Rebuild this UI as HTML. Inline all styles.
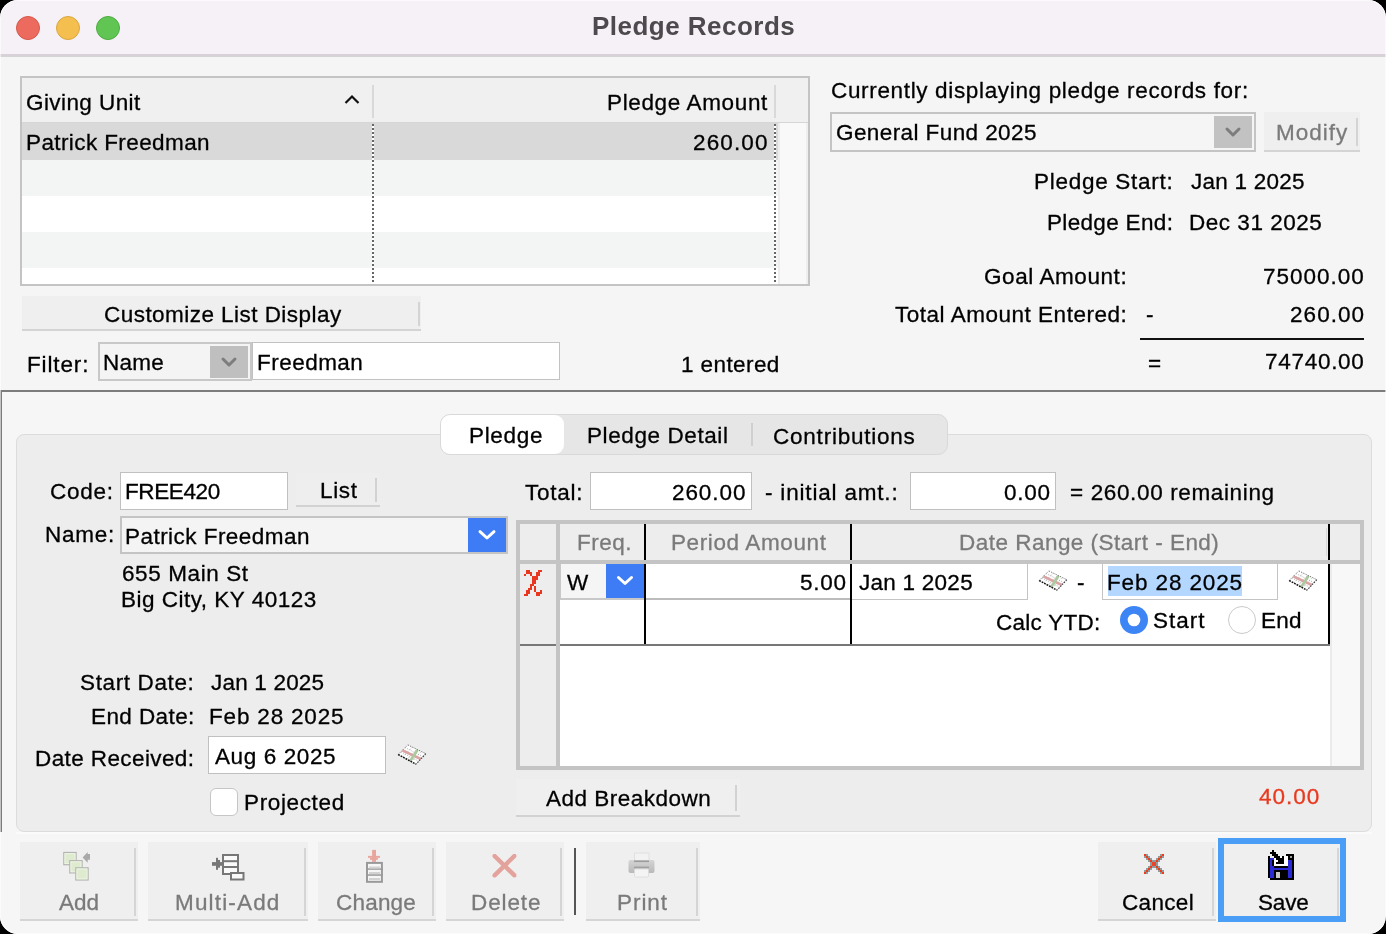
<!DOCTYPE html>
<html><head><meta charset="utf-8"><title>Pledge Records</title>
<style>
html,body{margin:0;padding:0;background:#000;width:1386px;height:934px;overflow:hidden;}
#win{position:absolute;left:0;top:0;width:1386px;height:934px;border-radius:18px;overflow:hidden;background:#f5f5f5;}
.t{position:absolute;white-space:nowrap;font-family:"Liberation Sans",sans-serif;will-change:transform;-webkit-text-stroke:0.3px currentColor;}
</style></head><body><div id="win">
<div style="position:absolute;left:0px;top:0px;width:1386px;height:54px;background:#f6f1f6;"></div>
<div style="position:absolute;left:0px;top:54px;width:1386px;height:1.5px;background:#d8d2d8;"></div>
<div style="position:absolute;left:0px;top:55.5px;width:1386px;height:1.5px;background:#d4d4d4;"></div>
<div style="position:absolute;left:0px;top:57px;width:1386px;height:334px;background:#f5f5f5;"></div>
<div class="t" style="left:591.60px;top:13.49px;font-size:26px;line-height:26px;color:#4c4a4c;font-weight:700;letter-spacing:0.477px;-webkit-text-stroke:0;">Pledge Records</div>
<svg style="position:absolute;left:15px;top:15px;" width="26" height="26" viewBox="0 0 26 26"><circle cx="13" cy="13" r="11.5" fill="#ed6a5e" stroke="#d5574b" stroke-width="1"/></svg>
<svg style="position:absolute;left:55px;top:15px;" width="26" height="26" viewBox="0 0 26 26"><circle cx="13" cy="13" r="11.5" fill="#f5bf4f" stroke="#d9a63e" stroke-width="1"/></svg>
<svg style="position:absolute;left:95px;top:15px;" width="26" height="26" viewBox="0 0 26 26"><circle cx="13" cy="13" r="11.5" fill="#61c554" stroke="#4eab42" stroke-width="1"/></svg>
<div style="position:absolute;left:20px;top:76px;width:790px;height:210px;background:#c4c4c4;"></div>
<div style="position:absolute;left:22px;top:78px;width:786px;height:206px;background:#ffffff;"></div>
<div style="position:absolute;left:22px;top:78px;width:786px;height:44px;background:#f0f0f0;"></div>
<div style="position:absolute;left:22px;top:122px;width:786px;height:1px;background:#d6d6d6;"></div>
<div style="position:absolute;left:22px;top:123px;width:756px;height:37px;background:#d9d9d9;"></div>
<div style="position:absolute;left:22px;top:160px;width:756px;height:36px;background:#f3f4f4;"></div>
<div style="position:absolute;left:22px;top:232px;width:756px;height:36px;background:#f3f4f4;"></div>
<div style="position:absolute;left:778px;top:123px;width:30px;height:161px;background:#f9f9f9;border-left:2px solid #ececec;border-right:2px solid #efefef;box-sizing:border-box;"></div>
<div style="position:absolute;left:372px;top:85px;width:2px;height:33px;background:#d9d9d9;"></div>
<div style="position:absolute;left:774px;top:85px;width:2px;height:33px;background:#d9d9d9;"></div>
<div style="position:absolute;left:372px;top:124px;width:2px;height:160px;background:repeating-linear-gradient(180deg,#666 0 2px,#ffffff 2px 4px);"></div>
<div style="position:absolute;left:774px;top:124px;width:2px;height:160px;background:repeating-linear-gradient(180deg,#666 0 2px,#ffffff 2px 4px);"></div>
<div class="t" style="left:25.80px;top:91.85px;font-size:22.5px;line-height:22.5px;color:#000;font-weight:400;letter-spacing:0.420px;">Giving Unit</div>
<svg style="position:absolute;left:343px;top:93px;" width="18" height="12" viewBox="0 0 18 12"><polyline points="2.5,10 9,3.5 15.5,10" fill="none" stroke="#111" stroke-width="2.2"/></svg>
<div class="t" style="left:607.00px;top:91.85px;font-size:22.5px;line-height:22.5px;color:#000;font-weight:400;letter-spacing:0.642px;">Pledge Amount</div>
<div class="t" style="left:25.80px;top:131.85px;font-size:22.5px;line-height:22.5px;color:#000;font-weight:400;letter-spacing:0.400px;">Patrick Freedman</div>
<div class="t" style="left:693.30px;top:131.85px;font-size:22.5px;line-height:22.5px;color:#000;font-weight:400;letter-spacing:1.140px;">260.00</div>
<div style="position:absolute;left:22px;top:296px;width:399px;height:35px;background:#efefef;"></div>
<div style="position:absolute;left:22px;top:329px;width:399px;height:2px;background:#d4d4d4;"></div>
<div style="position:absolute;left:418px;top:302px;width:2px;height:24px;background:#d4d4d4;"></div>
<div class="t" style="left:104.00px;top:303.85px;font-size:22.5px;line-height:22.5px;color:#000;font-weight:400;letter-spacing:0.457px;">Customize List Display</div>
<div class="t" style="left:27.20px;top:353.60px;font-size:22.5px;line-height:22.5px;color:#000;font-weight:400;letter-spacing:0.867px;">Filter:</div>
<div style="position:absolute;left:98px;top:342px;width:154px;height:39px;background:#f4f4f4;border:2px solid #c8c8c8;box-sizing:border-box;"></div>
<div style="position:absolute;left:210px;top:346px;width:38px;height:32px;background:#bfbfbf;"></div>
<svg style="position:absolute;left:210px;top:346px;" width="38" height="32" viewBox="0 0 38 32"><polyline points="13,13 19,19 25,13" fill="none" stroke="#7d7d7d" stroke-width="3" stroke-linecap="round" stroke-linejoin="round"/></svg>
<div class="t" style="left:103.40px;top:351.65px;font-size:22.5px;line-height:22.5px;color:#000;font-weight:400;letter-spacing:0.267px;">Name</div>
<div style="position:absolute;left:252px;top:342px;width:308px;height:38px;background:#ffffff;border:1.5px solid #c2c2c2;box-sizing:border-box;"></div>
<div class="t" style="left:256.70px;top:351.65px;font-size:22.5px;line-height:22.5px;color:#000;font-weight:400;letter-spacing:0.471px;">Freedman</div>
<div class="t" style="left:680.60px;top:353.85px;font-size:22.5px;line-height:22.5px;color:#000;font-weight:400;letter-spacing:0.412px;">1 entered</div>
<div class="t" style="left:831.30px;top:79.65px;font-size:22.5px;line-height:22.5px;color:#000;font-weight:400;letter-spacing:0.659px;">Currently displaying pledge records for:</div>
<div style="position:absolute;left:830px;top:112px;width:426px;height:40px;background:#f5f5f5;border:2px solid #c4c4c4;box-sizing:border-box;"></div>
<div style="position:absolute;left:1214px;top:116px;width:38px;height:32px;background:#c2c2c2;"></div>
<svg style="position:absolute;left:1214px;top:116px;" width="38" height="32" viewBox="0 0 38 32"><polyline points="13,13 19,19 25,13" fill="none" stroke="#7d7d7d" stroke-width="3" stroke-linecap="round" stroke-linejoin="round"/></svg>
<div class="t" style="left:836.00px;top:121.85px;font-size:22.5px;line-height:22.5px;color:#000;font-weight:400;letter-spacing:0.412px;">General Fund 2025</div>
<div style="position:absolute;left:1264px;top:112px;width:96px;height:40px;background:#efefef;"></div>
<div style="position:absolute;left:1264px;top:150px;width:96px;height:2px;background:#d4d4d4;"></div>
<div style="position:absolute;left:1356px;top:118px;width:2px;height:28px;background:#d4d4d4;"></div>
<div class="t" style="left:1275.70px;top:121.85px;font-size:22.5px;line-height:22.5px;color:#7a7a7a;font-weight:400;letter-spacing:0.980px;">Modify</div>
<div class="t" style="left:1034.40px;top:171.45px;font-size:22.5px;line-height:22.5px;color:#000;font-weight:400;letter-spacing:0.717px;">Pledge Start:</div>
<div class="t" style="left:1190.80px;top:171.45px;font-size:22.5px;line-height:22.5px;color:#000;font-weight:400;letter-spacing:0.244px;">Jan 1 2025</div>
<div class="t" style="left:1046.70px;top:211.85px;font-size:22.5px;line-height:22.5px;color:#000;font-weight:400;letter-spacing:0.330px;">Pledge End:</div>
<div class="t" style="left:1188.80px;top:211.85px;font-size:22.5px;line-height:22.5px;color:#000;font-weight:400;letter-spacing:0.520px;">Dec 31 2025</div>
<div class="t" style="left:984.20px;top:266.05px;font-size:22.5px;line-height:22.5px;color:#000;font-weight:400;letter-spacing:0.573px;">Goal Amount:</div>
<div class="t" style="left:1263.20px;top:266.05px;font-size:22.5px;line-height:22.5px;color:#000;font-weight:400;letter-spacing:1.000px;">75000.00</div>
<div class="t" style="left:895.30px;top:303.95px;font-size:22.5px;line-height:22.5px;color:#000;font-weight:400;letter-spacing:0.520px;">Total Amount Entered:</div>
<div class="t" style="left:1146.00px;top:303.95px;font-size:22.5px;line-height:22.5px;color:#000;font-weight:400;letter-spacing:0.000px;">-</div>
<div class="t" style="left:1289.70px;top:303.95px;font-size:22.5px;line-height:22.5px;color:#000;font-weight:400;letter-spacing:1.060px;">260.00</div>
<div style="position:absolute;left:1140px;top:338px;width:224px;height:2px;background:#111;"></div>
<div class="t" style="left:1148.10px;top:353.15px;font-size:22.5px;line-height:22.5px;color:#000;font-weight:400;letter-spacing:0.000px;">=</div>
<div class="t" style="left:1265.00px;top:350.85px;font-size:22.5px;line-height:22.5px;color:#000;font-weight:400;letter-spacing:0.714px;">74740.00</div>
<div style="position:absolute;left:0px;top:390px;width:1386px;height:2px;background:#7c7c7c;"></div>
<div style="position:absolute;left:0px;top:392px;width:1384px;height:542px;background:#f6f6f6;"></div>
<div style="position:absolute;left:0px;top:392px;width:2px;height:440px;background:#7c7c7c;"></div>
<div style="position:absolute;left:16px;top:434px;width:1356px;height:398px;background:#ededed;border:1px solid #dcdcdc;border-radius:8px;box-sizing:border-box;"></div>
<div style="position:absolute;left:16px;top:832px;width:1356px;height:2px;background:#fbfbfb;"></div>
<div style="position:absolute;left:440px;top:414px;width:508px;height:41px;background:#e6e6e6;border:1px solid #d9d9d9;border-radius:10px;box-sizing:border-box;"></div>
<div style="position:absolute;left:441px;top:415px;width:123px;height:39px;background:#ffffff;border-radius:9px;"></div>
<div style="position:absolute;left:751px;top:423px;width:2px;height:23px;background:#d0d0d0;"></div>
<div class="t" style="left:468.80px;top:425.35px;font-size:22.5px;line-height:22.5px;color:#000;font-weight:400;letter-spacing:0.680px;">Pledge</div>
<div class="t" style="left:586.80px;top:425.35px;font-size:22.5px;line-height:22.5px;color:#000;font-weight:400;letter-spacing:0.592px;">Pledge Detail</div>
<div class="t" style="left:773.40px;top:425.85px;font-size:22.5px;line-height:22.5px;color:#000;font-weight:400;letter-spacing:0.775px;">Contributions</div>
<div class="t" style="left:49.70px;top:481.45px;font-size:22.5px;line-height:22.5px;color:#000;font-weight:400;letter-spacing:0.750px;">Code:</div>
<div style="position:absolute;left:120px;top:472px;width:168px;height:38px;background:#fff;border:1.5px solid #c0c0c0;box-sizing:border-box;"></div>
<div class="t" style="left:124.80px;top:481.45px;font-size:22.5px;line-height:22.5px;color:#000;font-weight:400;letter-spacing:-0.383px;">FREE420</div>
<div style="position:absolute;left:296px;top:473px;width:84px;height:34px;background:#eeeeee;"></div>
<div style="position:absolute;left:296px;top:505px;width:84px;height:2px;background:#d2d2d2;"></div>
<div style="position:absolute;left:375px;top:478px;width:2px;height:24px;background:#d2d2d2;"></div>
<div class="t" style="left:319.70px;top:479.75px;font-size:22.5px;line-height:22.5px;color:#000;font-weight:400;letter-spacing:0.667px;">List</div>
<div class="t" style="left:44.90px;top:523.85px;font-size:22.5px;line-height:22.5px;color:#000;font-weight:400;letter-spacing:0.725px;">Name:</div>
<div style="position:absolute;left:120px;top:516px;width:388px;height:38px;background:#f4f4f4;border:2px solid #c4c4c4;box-sizing:border-box;"></div>
<div style="position:absolute;left:468px;top:518px;width:38px;height:34px;background:#3d7cf4;"></div>
<svg style="position:absolute;left:468px;top:518px;" width="38" height="34" viewBox="0 0 38 34"><polyline points="12,13.7 19,20 26,13.7" fill="none" stroke="#fff" stroke-width="3" stroke-linecap="round" stroke-linejoin="round"/></svg>
<div class="t" style="left:124.80px;top:525.65px;font-size:22.5px;line-height:22.5px;color:#000;font-weight:400;letter-spacing:0.460px;">Patrick Freedman</div>
<div class="t" style="left:121.70px;top:563.25px;font-size:22.5px;line-height:22.5px;color:#000;font-weight:400;letter-spacing:0.600px;">655 Main St</div>
<div class="t" style="left:120.70px;top:589.45px;font-size:22.5px;line-height:22.5px;color:#000;font-weight:400;letter-spacing:0.500px;">Big City, KY 40123</div>
<div class="t" style="left:79.70px;top:672.15px;font-size:22.5px;line-height:22.5px;color:#000;font-weight:400;letter-spacing:0.630px;">Start Date:</div>
<div class="t" style="left:211.00px;top:671.95px;font-size:22.5px;line-height:22.5px;color:#000;font-weight:400;letter-spacing:0.189px;">Jan 1 2025</div>
<div class="t" style="left:90.70px;top:705.75px;font-size:22.5px;line-height:22.5px;color:#000;font-weight:400;letter-spacing:0.412px;">End Date:</div>
<div class="t" style="left:209.00px;top:705.75px;font-size:22.5px;line-height:22.5px;color:#000;font-weight:400;letter-spacing:0.820px;">Feb 28 2025</div>
<div class="t" style="left:34.80px;top:747.85px;font-size:22.5px;line-height:22.5px;color:#000;font-weight:400;letter-spacing:0.400px;">Date Received:</div>
<div style="position:absolute;left:208px;top:736px;width:178px;height:38px;background:#fff;border:1.5px solid #c0c0c0;box-sizing:border-box;"></div>
<div class="t" style="left:214.60px;top:745.85px;font-size:22.5px;line-height:22.5px;color:#000;font-weight:400;letter-spacing:0.600px;">Aug 6 2025</div>
<div style="position:absolute;left:210px;top:788px;width:28px;height:28px;background:#fff;border:1px solid #c6c6c6;border-radius:6px;box-sizing:border-box;"></div>
<div class="t" style="left:243.50px;top:791.65px;font-size:22.5px;line-height:22.5px;color:#000;font-weight:400;letter-spacing:0.638px;">Projected</div>
<div class="t" style="left:524.90px;top:481.65px;font-size:22.5px;line-height:22.5px;color:#000;font-weight:400;letter-spacing:0.740px;">Total:</div>
<div style="position:absolute;left:590px;top:472px;width:162px;height:38px;background:#fff;border:1.5px solid #c0c0c0;box-sizing:border-box;"></div>
<div class="t" style="left:672.00px;top:481.65px;font-size:22.5px;line-height:22.5px;color:#000;font-weight:400;letter-spacing:0.920px;">260.00</div>
<div class="t" style="left:764.60px;top:481.85px;font-size:22.5px;line-height:22.5px;color:#000;font-weight:400;letter-spacing:0.814px;">- initial amt.:</div>
<div style="position:absolute;left:910px;top:472px;width:146px;height:38px;background:#fff;border:1.5px solid #c0c0c0;box-sizing:border-box;"></div>
<div class="t" style="left:1003.70px;top:481.85px;font-size:22.5px;line-height:22.5px;color:#000;font-weight:400;letter-spacing:0.767px;">0.00</div>
<div class="t" style="left:1069.80px;top:482.05px;font-size:22.5px;line-height:22.5px;color:#000;font-weight:400;letter-spacing:0.635px;">= 260.00 remaining</div>
<div style="position:absolute;left:516px;top:520px;width:848px;height:250px;background:#c4c4c4;"></div>
<div style="position:absolute;left:520px;top:524px;width:840px;height:242px;background:#ffffff;"></div>
<div style="position:absolute;left:520px;top:524px;width:840px;height:36px;background:#ededed;"></div>
<div style="position:absolute;left:520px;top:564px;width:36px;height:202px;background:#ededed;"></div>
<div style="position:absolute;left:556px;top:524px;width:4px;height:242px;background:#c4c4c4;"></div>
<div style="position:absolute;left:1330px;top:564px;width:30px;height:202px;background:#f8f8f8;border-left:2px solid #ebebeb;box-sizing:border-box;"></div>
<div style="position:absolute;left:1326px;top:528px;width:1px;height:28px;background:#d8d8d8;"></div>
<div style="position:absolute;left:644px;top:524px;width:2px;height:122px;background:#000;"></div>
<div style="position:absolute;left:850px;top:524px;width:2px;height:122px;background:#000;"></div>
<div style="position:absolute;left:1328px;top:524px;width:2px;height:122px;background:#000;"></div>
<div style="position:absolute;left:520px;top:560px;width:840px;height:4px;background:#c4c4c4;"></div>
<div style="position:absolute;left:520px;top:644px;width:36px;height:2px;background:#777;"></div>
<div style="position:absolute;left:560px;top:644px;width:770px;height:2px;background:#777;"></div>
<div class="t" style="left:577.40px;top:532.05px;font-size:22.5px;line-height:22.5px;color:#7a7a7a;font-weight:400;letter-spacing:0.500px;">Freq.</div>
<div class="t" style="left:670.60px;top:532.05px;font-size:22.5px;line-height:22.5px;color:#7a7a7a;font-weight:400;letter-spacing:0.617px;">Period Amount</div>
<div class="t" style="left:959.00px;top:531.65px;font-size:22.5px;line-height:22.5px;color:#7a7a7a;font-weight:400;letter-spacing:0.478px;">Date Range (Start - End)</div>
<div style="position:absolute;left:560px;top:564px;width:84px;height:36px;background:#c8c8c8;"></div>
<div style="position:absolute;left:561px;top:564px;width:83px;height:34px;background:#f5f5f5;"></div>
<div style="position:absolute;left:606px;top:564px;width:38px;height:34px;background:#3d7cf4;"></div>
<svg style="position:absolute;left:606px;top:564px;" width="38" height="34" viewBox="0 0 38 34"><polyline points="12.5,13.5 19,19.5 25.5,13.5" fill="none" stroke="#fff" stroke-width="3" stroke-linecap="round" stroke-linejoin="round"/></svg>
<div class="t" style="left:566.90px;top:571.85px;font-size:22.5px;line-height:22.5px;color:#000;font-weight:400;letter-spacing:0.000px;">W</div>
<div style="position:absolute;left:646px;top:598px;width:204px;height:2px;background:#bcbcbc;"></div>
<div class="t" style="left:800.00px;top:571.85px;font-size:22.5px;line-height:22.5px;color:#000;font-weight:400;letter-spacing:0.733px;">5.00</div>
<div style="position:absolute;left:852px;top:564px;width:176px;height:36px;background:#fff;border-right:1.5px solid #c4c4c4;border-bottom:1.5px solid #c4c4c4;box-sizing:border-box;"></div>
<div class="t" style="left:858.90px;top:571.85px;font-size:22.5px;line-height:22.5px;color:#000;font-weight:400;letter-spacing:0.256px;">Jan 1 2025</div>
<div class="t" style="left:1076.60px;top:571.85px;font-size:22.5px;line-height:22.5px;color:#000;font-weight:400;letter-spacing:0.000px;">-</div>
<div style="position:absolute;left:1102px;top:564px;width:176px;height:36px;background:#fff;border:1.5px solid #c4c4c4;border-top:none;box-sizing:border-box;"></div>
<div style="position:absolute;left:1108px;top:566px;width:134px;height:30px;background:#b3d7ff;"></div>
<div class="t" style="left:1107.00px;top:571.85px;font-size:22.5px;line-height:22.5px;color:#000;font-weight:400;letter-spacing:0.870px;">Feb 28 2025</div>
<div class="t" style="left:995.80px;top:611.65px;font-size:22.5px;line-height:22.5px;color:#000;font-weight:400;letter-spacing:0.275px;">Calc YTD:</div>
<svg style="position:absolute;left:1119px;top:605px;" width="30" height="30" viewBox="0 0 30 30"><circle cx="15" cy="15" r="14" fill="#3d84f5"/><circle cx="15" cy="15" r="6.3" fill="#fff"/></svg>
<div class="t" style="left:1153.40px;top:610.05px;font-size:22.5px;line-height:22.5px;color:#000;font-weight:400;letter-spacing:1.025px;">Start</div>
<svg style="position:absolute;left:1227px;top:605px;" width="30" height="30" viewBox="0 0 30 30"><circle cx="15" cy="15" r="13.5" fill="#fff" stroke="#cacaca" stroke-width="1"/></svg>
<div class="t" style="left:1260.80px;top:610.05px;font-size:22.5px;line-height:22.5px;color:#000;font-weight:400;letter-spacing:0.200px;">End</div>
<div style="position:absolute;left:516px;top:779px;width:224px;height:38px;background:#efefef;"></div>
<div style="position:absolute;left:516px;top:815px;width:224px;height:2px;background:#d2d2d2;"></div>
<div style="position:absolute;left:735px;top:785px;width:2px;height:26px;background:#d2d2d2;"></div>
<div class="t" style="left:546.00px;top:787.85px;font-size:22.5px;line-height:22.5px;color:#000;font-weight:400;letter-spacing:0.500px;">Add Breakdown</div>
<div class="t" style="left:1258.90px;top:786.15px;font-size:22.5px;line-height:22.5px;color:#e8391f;font-weight:400;letter-spacing:1.000px;">40.00</div>
<div style="position:absolute;left:20px;top:842px;width:118px;height:79px;background:#efefef;"></div>
<div style="position:absolute;left:20px;top:919px;width:118px;height:2px;background:#d5d5d5;"></div>
<div style="position:absolute;left:134px;top:848px;width:2px;height:68px;background:#d5d5d5;"></div>
<div class="t" style="left:58.80px;top:891.85px;font-size:22.5px;line-height:22.5px;color:#7a7a7a;font-weight:400;letter-spacing:0.000px;">Add</div>
<div style="position:absolute;left:148px;top:842px;width:160px;height:79px;background:#efefef;"></div>
<div style="position:absolute;left:148px;top:919px;width:160px;height:2px;background:#d5d5d5;"></div>
<div style="position:absolute;left:304px;top:848px;width:2px;height:68px;background:#d5d5d5;"></div>
<div class="t" style="left:175.00px;top:891.85px;font-size:22.5px;line-height:22.5px;color:#7a7a7a;font-weight:400;letter-spacing:1.163px;">Multi-Add</div>
<div style="position:absolute;left:318px;top:842px;width:118px;height:79px;background:#efefef;"></div>
<div style="position:absolute;left:318px;top:919px;width:118px;height:2px;background:#d5d5d5;"></div>
<div style="position:absolute;left:432px;top:848px;width:2px;height:68px;background:#d5d5d5;"></div>
<div class="t" style="left:336.00px;top:891.85px;font-size:22.5px;line-height:22.5px;color:#7a7a7a;font-weight:400;letter-spacing:0.200px;">Change</div>
<div style="position:absolute;left:446px;top:842px;width:118px;height:79px;background:#efefef;"></div>
<div style="position:absolute;left:446px;top:919px;width:118px;height:2px;background:#d5d5d5;"></div>
<div style="position:absolute;left:560px;top:848px;width:2px;height:68px;background:#d5d5d5;"></div>
<div class="t" style="left:470.50px;top:891.85px;font-size:22.5px;line-height:22.5px;color:#7a7a7a;font-weight:400;letter-spacing:0.880px;">Delete</div>
<div style="position:absolute;left:574px;top:848px;width:2px;height:67px;background:#555;"></div>
<div style="position:absolute;left:586px;top:842px;width:114px;height:79px;background:#efefef;"></div>
<div style="position:absolute;left:586px;top:919px;width:114px;height:2px;background:#d5d5d5;"></div>
<div style="position:absolute;left:696px;top:848px;width:2px;height:68px;background:#d5d5d5;"></div>
<div class="t" style="left:616.50px;top:891.85px;font-size:22.5px;line-height:22.5px;color:#7a7a7a;font-weight:400;letter-spacing:0.950px;">Print</div>
<div style="position:absolute;left:1098px;top:842px;width:118px;height:79px;background:#efefef;"></div>
<div style="position:absolute;left:1098px;top:919px;width:118px;height:2px;background:#d5d5d5;"></div>
<div style="position:absolute;left:1212px;top:848px;width:2px;height:68px;background:#d5d5d5;"></div>
<div class="t" style="left:1122.00px;top:891.85px;font-size:22.5px;line-height:22.5px;color:#000;font-weight:400;letter-spacing:0.320px;">Cancel</div>
<div style="position:absolute;left:1218px;top:838px;width:128px;height:84px;background:#4a9ef5;"></div>
<div style="position:absolute;left:1224px;top:844px;width:116px;height:72px;background:#efefef;"></div>
<div style="position:absolute;left:1337px;top:848px;width:2px;height:68px;background:#d5d5d5;"></div>
<div class="t" style="left:1257.80px;top:891.85px;font-size:22.5px;line-height:22.5px;color:#000;font-weight:400;letter-spacing:-0.133px;">Save</div>
<svg style="position:absolute;left:1038px;top:570px" width="32" height="24" viewBox="0 0 32 24"><polygon points="1.20,10.50 10.80,0.90 28.80,9.70 19.00,20.20" fill="#fff"/><line x1="3.89" y1="7.81" x2="21.74" y2="17.26" stroke="#9a9a9a" stroke-width="0.8" stroke-dasharray="1 1.4"/><line x1="6.00" y1="5.70" x2="23.90" y2="14.95" stroke="#9a9a9a" stroke-width="0.8" stroke-dasharray="1 1.4"/><line x1="8.11" y1="3.59" x2="26.06" y2="12.64" stroke="#9a9a9a" stroke-width="0.8" stroke-dasharray="1 1.4"/><line x1="5.65" y1="12.92" x2="15.30" y2="3.10" stroke="#9a9a9a" stroke-width="0.8" stroke-dasharray="1 1.4"/><line x1="10.10" y1="15.35" x2="19.80" y2="5.30" stroke="#9a9a9a" stroke-width="0.8" stroke-dasharray="1 1.4"/><line x1="14.55" y1="17.78" x2="24.30" y2="7.50" stroke="#9a9a9a" stroke-width="0.8" stroke-dasharray="1 1.4"/><line x1="5.33" y1="6.37" x2="23.90" y2="14.95" stroke="#dba3a3" stroke-width="2.6"/><line x1="13.13" y1="17.00" x2="20.70" y2="5.74" stroke="#aac99d" stroke-width="2.6"/><line x1="1.20" y1="10.50" x2="10.80" y2="0.90" stroke="#888" stroke-width="0.9" stroke-dasharray="1.2 1"/><line x1="10.80" y1="0.90" x2="28.80" y2="9.70" stroke="#666" stroke-width="0.9" stroke-dasharray="1.3 1.2"/><line x1="28.80" y1="9.70" x2="19.00" y2="20.20" stroke="#333" stroke-width="1.1" stroke-dasharray="1.5 1.2"/><line x1="1.20" y1="10.50" x2="19.00" y2="20.20" stroke="#111" stroke-width="1.5" stroke-dasharray="1.8 1"/></svg>
<svg style="position:absolute;left:1288px;top:570px" width="32" height="24" viewBox="0 0 32 24"><polygon points="1.20,10.50 10.80,0.90 28.80,9.70 19.00,20.20" fill="#fff"/><line x1="3.89" y1="7.81" x2="21.74" y2="17.26" stroke="#9a9a9a" stroke-width="0.8" stroke-dasharray="1 1.4"/><line x1="6.00" y1="5.70" x2="23.90" y2="14.95" stroke="#9a9a9a" stroke-width="0.8" stroke-dasharray="1 1.4"/><line x1="8.11" y1="3.59" x2="26.06" y2="12.64" stroke="#9a9a9a" stroke-width="0.8" stroke-dasharray="1 1.4"/><line x1="5.65" y1="12.92" x2="15.30" y2="3.10" stroke="#9a9a9a" stroke-width="0.8" stroke-dasharray="1 1.4"/><line x1="10.10" y1="15.35" x2="19.80" y2="5.30" stroke="#9a9a9a" stroke-width="0.8" stroke-dasharray="1 1.4"/><line x1="14.55" y1="17.78" x2="24.30" y2="7.50" stroke="#9a9a9a" stroke-width="0.8" stroke-dasharray="1 1.4"/><line x1="5.33" y1="6.37" x2="23.90" y2="14.95" stroke="#dba3a3" stroke-width="2.6"/><line x1="13.13" y1="17.00" x2="20.70" y2="5.74" stroke="#aac99d" stroke-width="2.6"/><line x1="1.20" y1="10.50" x2="10.80" y2="0.90" stroke="#888" stroke-width="0.9" stroke-dasharray="1.2 1"/><line x1="10.80" y1="0.90" x2="28.80" y2="9.70" stroke="#666" stroke-width="0.9" stroke-dasharray="1.3 1.2"/><line x1="28.80" y1="9.70" x2="19.00" y2="20.20" stroke="#333" stroke-width="1.1" stroke-dasharray="1.5 1.2"/><line x1="1.20" y1="10.50" x2="19.00" y2="20.20" stroke="#111" stroke-width="1.5" stroke-dasharray="1.8 1"/></svg>
<svg style="position:absolute;left:397px;top:744px" width="32" height="24" viewBox="0 0 32 24"><polygon points="1.20,10.50 10.80,0.90 28.80,9.70 19.00,20.20" fill="#fff"/><line x1="3.89" y1="7.81" x2="21.74" y2="17.26" stroke="#9a9a9a" stroke-width="0.8" stroke-dasharray="1 1.4"/><line x1="6.00" y1="5.70" x2="23.90" y2="14.95" stroke="#9a9a9a" stroke-width="0.8" stroke-dasharray="1 1.4"/><line x1="8.11" y1="3.59" x2="26.06" y2="12.64" stroke="#9a9a9a" stroke-width="0.8" stroke-dasharray="1 1.4"/><line x1="5.65" y1="12.92" x2="15.30" y2="3.10" stroke="#9a9a9a" stroke-width="0.8" stroke-dasharray="1 1.4"/><line x1="10.10" y1="15.35" x2="19.80" y2="5.30" stroke="#9a9a9a" stroke-width="0.8" stroke-dasharray="1 1.4"/><line x1="14.55" y1="17.78" x2="24.30" y2="7.50" stroke="#9a9a9a" stroke-width="0.8" stroke-dasharray="1 1.4"/><line x1="5.33" y1="6.37" x2="23.90" y2="14.95" stroke="#dba3a3" stroke-width="2.6"/><line x1="13.13" y1="17.00" x2="20.70" y2="5.74" stroke="#aac99d" stroke-width="2.6"/><line x1="1.20" y1="10.50" x2="10.80" y2="0.90" stroke="#888" stroke-width="0.9" stroke-dasharray="1.2 1"/><line x1="10.80" y1="0.90" x2="28.80" y2="9.70" stroke="#666" stroke-width="0.9" stroke-dasharray="1.3 1.2"/><line x1="28.80" y1="9.70" x2="19.00" y2="20.20" stroke="#333" stroke-width="1.1" stroke-dasharray="1.5 1.2"/><line x1="1.20" y1="10.50" x2="19.00" y2="20.20" stroke="#111" stroke-width="1.5" stroke-dasharray="1.8 1"/></svg>
<svg style="position:absolute;left:516px;top:562px" width="34" height="38" viewBox="0 0 34 38"><rect x="8" y="12" width="2" height="2" fill="#e8371e"/><rect x="10" y="8" width="4" height="2" fill="#e8371e"/><rect x="10" y="10" width="6" height="2" fill="#e8371e"/><rect x="14" y="12" width="2" height="2" fill="#e8371e"/><rect x="16" y="14" width="6" height="4" fill="#e8371e"/><rect x="22" y="8" width="4" height="2" fill="#e8371e"/><rect x="20" y="10" width="4" height="4" fill="#e8371e"/><rect x="16" y="18" width="4" height="4" fill="#e8371e"/><rect x="14" y="22" width="4" height="2" fill="#e8371e"/><rect x="14" y="24" width="2" height="2" fill="#e8371e"/><rect x="12" y="26" width="4" height="2" fill="#e8371e"/><rect x="10" y="28" width="4" height="4" fill="#e8371e"/><rect x="8" y="32" width="4" height="2" fill="#e8371e"/><rect x="18" y="24" width="2" height="6" fill="#e8371e"/><rect x="20" y="30" width="4" height="4" fill="#e8371e"/><rect x="24" y="28" width="2" height="4" fill="#e8371e"/></svg>
<svg style="position:absolute;left:62px;top:851px" width="30" height="31" viewBox="0 0 30 31"><rect x="1.8" y="1.5" width="12.3" height="12.2" fill="#dfebcf" stroke="#b3b3b3" stroke-width="1.2"/><rect x="2.9000000000000004" y="2.6" width="10.1" height="10" fill="none" stroke="#eef5e6" stroke-width="0.9"/><rect x="7.8" y="9.7" width="12.3" height="12.2" fill="#dfebcf" stroke="#b3b3b3" stroke-width="1.2"/><rect x="8.9" y="10.799999999999999" width="10.1" height="10" fill="none" stroke="#eef5e6" stroke-width="0.9"/><rect x="13.8" y="16.8" width="12.3" height="12.2" fill="#dfebcf" stroke="#b3b3b3" stroke-width="1.2"/><rect x="14.9" y="17.900000000000002" width="10.1" height="10" fill="none" stroke="#eef5e6" stroke-width="0.9"/><polygon points="20.6,6.4 25.7,1 25.7,3 28,3 28,8.8 25.7,8.8 25.7,11.8" fill="#a9a9a9"/></svg>
<svg style="position:absolute;left:211px;top:853px" width="34" height="29" viewBox="0 0 34 29"><rect x="12" y="2" width="15" height="19" fill="#fafafa" stroke="#777" stroke-width="2"/><rect x="11" y="7.2" width="17" height="2" fill="#777"/><rect x="11" y="13" width="17" height="2" fill="#777"/><rect x="20" y="20" width="12.5" height="6.5" fill="#fafafa" stroke="#777" stroke-width="2"/><rect x="1" y="9.1" width="11" height="3.7" fill="#777"/><rect x="5" y="4.8" width="2" height="12" fill="#777"/><rect x="7" y="7" width="2" height="7.7" fill="#777"/></svg>
<svg style="position:absolute;left:365px;top:849px" width="19" height="34" viewBox="0 0 19 34"><rect x="2" y="13.9" width="14.9" height="18.9" fill="#f6f6f6" stroke="#999" stroke-width="2"/><rect x="1" y="19.3" width="16.9" height="1.5" fill="#999"/><rect x="1" y="25.3" width="16.9" height="1.5" fill="#999"/><rect x="4" y="17.5" width="11" height="2" fill="#d2d2d2"/><rect x="4" y="23" width="11" height="2" fill="#d2d2d2"/><rect x="4" y="29" width="11" height="2" fill="#d2d2d2"/><rect x="7.1" y="0.9" width="3.9" height="12" fill="#e8a59d"/><rect x="3" y="6.9" width="12" height="1.9" fill="#e8a59d"/><rect x="5" y="8.8" width="7.9" height="2" fill="#e8a59d"/></svg>
<svg style="position:absolute;left:491px;top:853px" width="27" height="26" viewBox="0 0 27 26"><clipPath id="dc"><rect x="1.4" y="1" width="24" height="23.4"/></clipPath><g clip-path="url(#dc)" stroke="#e3a39c" stroke-width="4.4" stroke-linecap="square"><line x1="3.6" y1="3" x2="23.4" y2="22.4"/><line x1="23.4" y1="3" x2="3.6" y2="22.4"/></g></svg>
<svg style="position:absolute;left:627px;top:852px" width="30" height="27" viewBox="0 0 30 27"><defs><linearGradient id="pg" x1="0" y1="0" x2="0" y2="1"><stop offset="0" stop-color="#d4d4d4"/><stop offset="1" stop-color="#b9b9b9"/></linearGradient></defs><rect x="7.5" y="1" width="14.5" height="8" fill="#f2f2f2" stroke="#dddddd" stroke-width="0.8"/><rect x="1.5" y="8" width="26" height="13" rx="2" fill="url(#pg)"/><rect x="7" y="8.5" width="15" height="1.6" fill="#9c9c9c"/><rect x="7" y="14.6" width="15" height="1.6" fill="#a0a0a0"/><rect x="7.5" y="17" width="14" height="8" rx="1" fill="#f4f4f4" stroke="#dadada" stroke-width="0.8"/></svg>
<svg style="position:absolute;left:1144px;top:854px" width="20" height="20" viewBox="0 0 20 20"><rect x="0" y="0" width="2" height="2" fill="#f0391a"/><rect x="2" y="2" width="2" height="2" fill="#f0391a"/><rect x="4" y="4" width="2" height="2" fill="#f0391a"/><rect x="6" y="6" width="2" height="2" fill="#f0391a"/><rect x="12" y="6" width="2" height="2" fill="#f0391a"/><rect x="14" y="4" width="2" height="2" fill="#f0391a"/><rect x="16" y="2" width="2" height="2" fill="#f0391a"/><rect x="18" y="0" width="2" height="2" fill="#f0391a"/><rect x="6" y="12" width="2" height="2" fill="#f0391a"/><rect x="4" y="14" width="2" height="2" fill="#f0391a"/><rect x="2" y="16" width="2" height="2" fill="#f0391a"/><rect x="0" y="18" width="2" height="2" fill="#f0391a"/><rect x="12" y="12" width="2" height="2" fill="#f0391a"/><rect x="14" y="14" width="2" height="2" fill="#f0391a"/><rect x="16" y="16" width="2" height="2" fill="#f0391a"/><rect x="18" y="18" width="2" height="2" fill="#f0391a"/><rect x="2" y="0" width="2" height="2" fill="#8d9c9c"/><rect x="16" y="0" width="2" height="2" fill="#8d9c9c"/><rect x="0" y="2" width="2" height="2" fill="#8d9c9c"/><rect x="4" y="2" width="2" height="2" fill="#8d9c9c"/><rect x="14" y="2" width="2" height="2" fill="#8d9c9c"/><rect x="18" y="2" width="2" height="2" fill="#8d9c9c"/><rect x="2" y="4" width="2" height="2" fill="#8d9c9c"/><rect x="6" y="4" width="2" height="2" fill="#8d9c9c"/><rect x="12" y="4" width="2" height="2" fill="#8d9c9c"/><rect x="16" y="4" width="2" height="2" fill="#8d9c9c"/><rect x="4" y="6" width="2" height="2" fill="#8d9c9c"/><rect x="8" y="6" width="2" height="2" fill="#8d9c9c"/><rect x="10" y="6" width="2" height="2" fill="#8d9c9c"/><rect x="14" y="6" width="2" height="2" fill="#8d9c9c"/><rect x="6" y="8" width="2" height="2" fill="#8d9c9c"/><rect x="12" y="8" width="2" height="2" fill="#8d9c9c"/><rect x="6" y="10" width="2" height="2" fill="#8d9c9c"/><rect x="12" y="10" width="2" height="2" fill="#8d9c9c"/><rect x="4" y="12" width="2" height="2" fill="#8d9c9c"/><rect x="8" y="12" width="2" height="2" fill="#8d9c9c"/><rect x="10" y="12" width="2" height="2" fill="#8d9c9c"/><rect x="14" y="12" width="2" height="2" fill="#8d9c9c"/><rect x="2" y="14" width="2" height="2" fill="#8d9c9c"/><rect x="6" y="14" width="2" height="2" fill="#8d9c9c"/><rect x="12" y="14" width="2" height="2" fill="#8d9c9c"/><rect x="16" y="14" width="2" height="2" fill="#8d9c9c"/><rect x="0" y="16" width="2" height="2" fill="#8d9c9c"/><rect x="4" y="16" width="2" height="2" fill="#8d9c9c"/><rect x="14" y="16" width="2" height="2" fill="#8d9c9c"/><rect x="18" y="16" width="2" height="2" fill="#8d9c9c"/><rect x="2" y="18" width="2" height="2" fill="#8d9c9c"/><rect x="16" y="18" width="2" height="2" fill="#8d9c9c"/><rect x="8" y="8" width="4" height="4" fill="#e9452a"/></svg>
<svg style="position:absolute;left:1266px;top:848px" width="30" height="34" viewBox="0 0 30 34"><rect x="2" y="8" width="2" height="22" fill="#000"/><rect x="4" y="30" width="24" height="2" fill="#000"/><rect x="26" y="6" width="2" height="24" fill="#000"/><rect x="20" y="6" width="8" height="2" fill="#000"/><rect x="22" y="8" width="4" height="4" fill="#000"/><rect x="24" y="8" width="2" height="2" fill="#a0a0a0"/><rect x="4" y="10" width="4" height="20" fill="#2b2bd6"/><rect x="22" y="12" width="4" height="18" fill="#2b2bd6"/><rect x="8" y="20" width="14" height="2" fill="#2b2bd6"/><rect x="8" y="18" width="14" height="2" fill="#000"/><rect x="8" y="22" width="14" height="8" fill="#000"/><rect x="10" y="24" width="4" height="6" fill="#c8c8c8"/><rect x="6" y="12" width="2" height="6" fill="#000"/><rect x="8" y="8" width="14" height="10" fill="#fff"/><rect x="10" y="10" width="8" height="6" fill="#000"/><rect x="10" y="12" width="2" height="2" fill="#fff"/><rect x="6" y="2" width="2" height="2" fill="#000"/><rect x="4" y="4" width="6" height="2" fill="#000"/><rect x="6" y="6" width="6" height="2" fill="#000"/><rect x="8" y="8" width="6" height="2" fill="#000"/><rect x="16" y="8" width="2" height="2" fill="#000"/></svg>
<div style="position:absolute;left:0;top:0;width:1386px;height:934px;border-radius:18px;box-shadow:inset 0 0 0 1px rgba(255,255,255,0.55);"></div>
</div></body></html>
